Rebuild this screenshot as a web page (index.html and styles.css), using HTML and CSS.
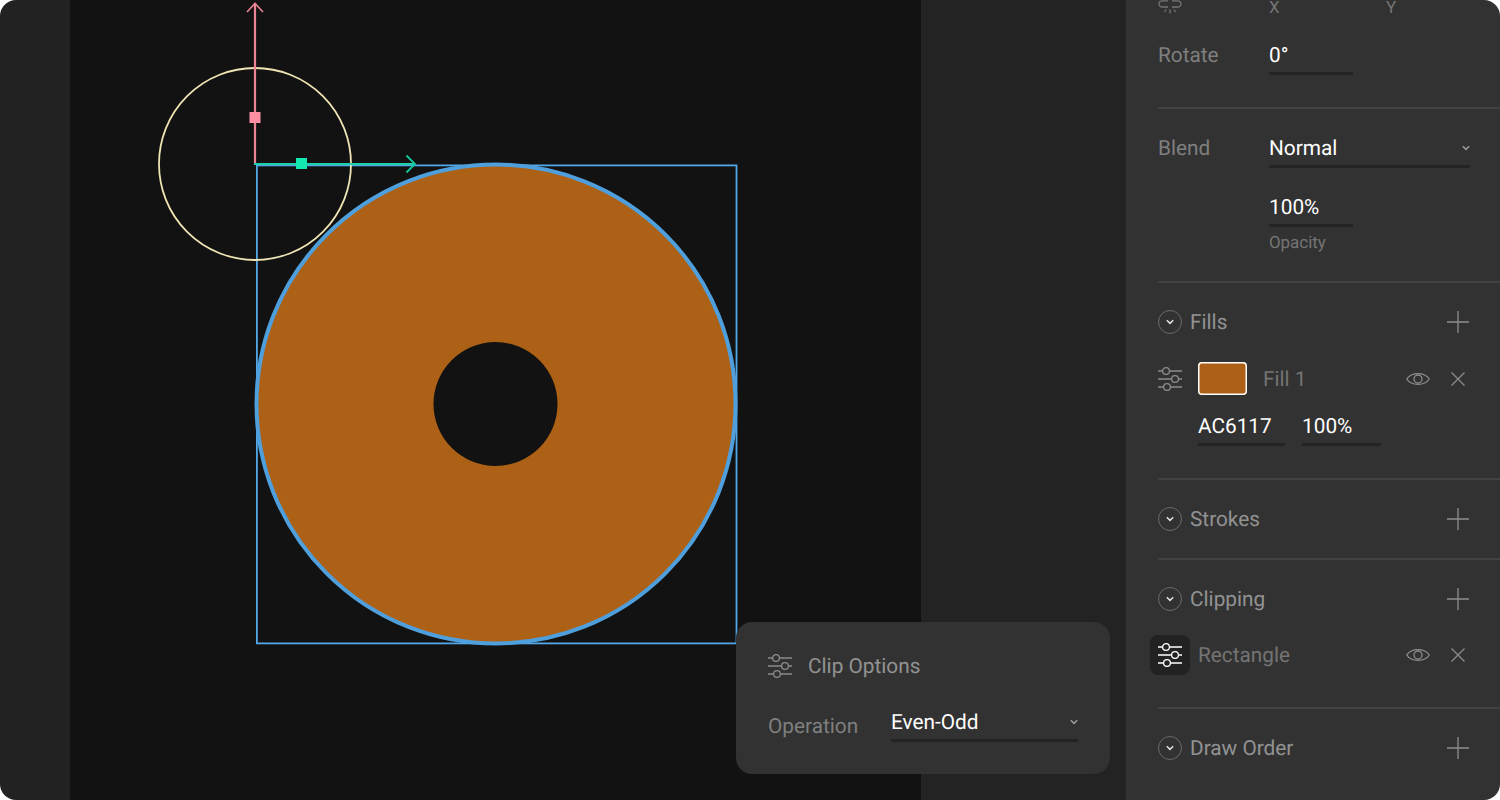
FILE: index.html
```html
<!DOCTYPE html>
<html lang="en">
<head>
    <meta charset="UTF-8">
    <meta name="viewport" content="width=device-width, initial-scale=1.0">
    <title>Clip Options</title>
    <link rel="stylesheet" href="styles.css">
</head>
<body>
    <svg class="defs" width="0" height="0" aria-hidden="true">
        <symbol id="sliders" viewBox="0 0 24 24">
            <path d="M0 4H4.5M11.5 4H24M0 12H13.5M20.5 12H24M0 20H5.5M12.5 20H24" fill="none" stroke="currentColor" stroke-width="1.3"/>
            <circle cx="8" cy="4" r="3.4" fill="none" stroke="currentColor" stroke-width="1.3"/>
            <circle cx="17" cy="12" r="3.4" fill="none" stroke="currentColor" stroke-width="1.3"/>
            <circle cx="9" cy="20" r="3.4" fill="none" stroke="currentColor" stroke-width="1.3"/>
        </symbol>
        <symbol id="eye" viewBox="0 0 24 16">
            <path d="M.7 8C5.5.8 18.5.8 23.3 8 18.5 15.2 5.500 15.2.7 8Z" fill="none" stroke="currentColor" stroke-width="1.3"/>
            <circle cx="12" cy="8" r="4" fill="none" stroke="currentColor" stroke-width="1.3"/>
        </symbol>
        <symbol id="close" viewBox="0 0 16 16">
            <path d="M1.5 1.5L14.5 14.5M14.5 1.5L1.5 14.5" fill="none" stroke="currentColor" stroke-width="1.3"/>
        </symbol>
        <symbol id="plus" viewBox="0 0 22 22">
            <path d="M11 0V22M0 11H22" fill="none" stroke="currentColor" stroke-width="1.3"/>
        </symbol>
        <symbol id="chevron" viewBox="0 0 8 6">
            <path d="M.8 1.2L4 4.4 7.2 1.2" fill="none" stroke="currentColor" stroke-width="1.5"/>
        </symbol>
    </svg>

    <div class="stage">
        <div class="gutter"></div>

        <div class="canvas">
            <svg class="drawing" viewBox="70 0 851 800" width="851" height="800">
                <rect x="256.9" y="165.4" width="479.6" height="478" fill="none" stroke="#52a8e6" stroke-width="1.8"/>
                <path fill-rule="evenodd" fill="#ac6117" d="M256 404a240 240 0 1 0 480 0a240 240 0 1 0 -480 0ZM433.5 404a62 62 0 1 0 124 0a62 62 0 1 0 -124 0Z"/>
                <circle cx="496" cy="404" r="239.5" fill="none" stroke="#4f9fdc" stroke-width="4"/>
                <circle cx="255" cy="164" r="96" fill="none" stroke="#efe5b4" stroke-width="1.8"/>
                <path d="M255 164V3" fill="none" stroke="#ea8494" stroke-width="2.2"/>
                <path d="M247 12L255 3.5 263 12" fill="none" stroke="#ea8494" stroke-width="1.6"/>
                <path d="M254 164H414" fill="none" stroke="#1fcfa8" stroke-width="2.2"/>
                <path d="M406.5 155.5L415 164 406.5 172.5" fill="none" stroke="#14c99a" stroke-width="1.8"/>
                <rect x="249.5" y="112" width="11" height="11" fill="#ff8fa3"/>
                <rect x="296" y="158" width="11" height="11" fill="#12e8b0"/>
            </svg>
        </div>

        <div class="margin"></div>

        <aside class="panel">
            <section class="section section-transform">
                <div class="link-row">
                    <svg class="link-icon" width="24" height="15" viewBox="0 0 24 15">
                        <path d="M10 .8H4.5C2.3.8 1 2.2 1 3.800S2.3 7 4.5 7H10M14 .8H19.5C21.7.8 23 2.2 23 3.800S21.7 7 19.5 7H14M12 9.5V13.5M8 9.5L6.5 12M16 9.5L17.500 12" fill="none" stroke="currentColor" stroke-width="1.3"/>
                    </svg>
                    <span class="axis axis-x">X</span>
                    <span class="axis">Y</span>
                </div>
                <div class="row">
                    <span class="label">Rotate</span>
                    <div class="field field-short">0°</div>
                </div>
            </section>

            <section class="section section-blend">
                <div class="row">
                    <span class="label">Blend</span>
                    <div class="field field-wide">
                        Normal
                        <svg class="chevron" width="8" height="6"><use href="#chevron"/></svg>
                    </div>
                </div>
                <div class="field field-short field-indent">100%</div>
                <div class="hint">Opacity</div>
            </section>

            <section class="section section-fills">
                <div class="head">
                    <span class="toggle"><svg width="8" height="6"><use href="#chevron"/></svg></span>
                    <span class="title">Fills</span>
                    <svg class="add" width="22" height="22"><use href="#plus"/></svg>
                </div>
                <div class="item item-fill">
                    <svg class="tune" width="24" height="24"><use href="#sliders"/></svg>
                    <span class="swatch"></span>
                    <span class="name">Fill 1</span>
                    <svg class="eye" width="24" height="16"><use href="#eye"/></svg>
                    <svg class="close" width="16" height="16"><use href="#close"/></svg>
                </div>
                <div class="color-row">
                    <div class="field field-hex">AC6117</div>
                    <div class="field field-alpha">100%</div>
                </div>
            </section>

            <section class="section section-strokes">
                <div class="head">
                    <span class="toggle"><svg width="8" height="6"><use href="#chevron"/></svg></span>
                    <span class="title">Strokes</span>
                    <svg class="add" width="22" height="22"><use href="#plus"/></svg>
                </div>
            </section>

            <section class="section section-clipping">
                <div class="head">
                    <span class="toggle"><svg width="8" height="6"><use href="#chevron"/></svg></span>
                    <span class="title">Clipping</span>
                    <svg class="add" width="22" height="22"><use href="#plus"/></svg>
                </div>
                <div class="item item-clip">
                    <span class="tune-box"><svg width="24" height="24"><use href="#sliders"/></svg></span>
                    <span class="name">Rectangle</span>
                    <svg class="eye" width="24" height="16"><use href="#eye"/></svg>
                    <svg class="close" width="16" height="16"><use href="#close"/></svg>
                </div>
            </section>

            <section class="section section-order">
                <div class="head">
                    <span class="toggle"><svg width="8" height="6"><use href="#chevron"/></svg></span>
                    <span class="title">Draw Order</span>
                    <svg class="add" width="22" height="22"><use href="#plus"/></svg>
                </div>
            </section>
        </aside>

        <div class="popover">
            <div class="popover-head">
                <svg class="tune" width="24" height="24"><use href="#sliders"/></svg>
                <span class="title">Clip Options</span>
            </div>
            <div class="popover-row">
                <span class="label">Operation</span>
                <div class="field field-op">
                    Even-Odd
                    <svg class="chevron" width="8" height="6"><use href="#chevron"/></svg>
                </div>
            </div>
        </div>
    </div>
</body>
</html>
```

FILE: styles.css
```css
/* Page */
body {
    margin: 0;
    background-color: #fff;
    font-family: 'Roboto', sans-serif;
    font-size: 20.8px;
    line-height: 24px;
    text-rendering: geometricPrecision;
}
.defs {
    position: absolute;
}
.stage {
    position: relative;
    display: flex;
    width: 1500px;
    height: 800px;
    border-radius: 16px;
    overflow: hidden;
}
svg {
    display: block;
    flex-shrink: 0;
}

/* Background columns */
.gutter {
    width: 70px;
    background-color: #222;
}
.canvas {
    width: 851px;
    background-color: #121212;
}
.margin {
    width: 205px;
    background-color: #232323;
}

/* Right panel */
.panel {
    width: 374px;
    background-color: #323232;
}
.section {
    box-sizing: border-box;
    margin-left: 32px;
    border-bottom: 2px solid #424242;
}
.section:last-child {
    border-bottom: none;
}
.section-transform {
    height: 109px;
}
.section-blend {
    height: 174px;
    padding-top: 27px;
}
.section-fills {
    padding: 27px 0 32px;
}
.section-strokes {
    padding: 27px 0 27px;
}
.section-clipping {
    padding: 27px 0 32px;
}
.section-order {
    padding-top: 27px;
}

.link-row {
    display: flex;
    align-items: flex-end;
    height: 16px;
    margin-bottom: 27px;
    color: #757575;
    overflow: hidden;
}
.link-icon {
    align-self: flex-start;
    width: 24px;
    margin-right: 87px;
}
.axis {
    font-size: 16.9px;
    line-height: 16px;
}
.axis-x {
    width: 117px;
}

.row {
    display: flex;
}
.label {
    width: 111px;
    padding-top: 1px;
    color: #7f7f7f;
}

/* Underlined inputs */
.field {
    display: flex;
    justify-content: space-between;
    align-items: center;
    box-sizing: border-box;
    height: 32px;
    padding-bottom: 3px;
    border-bottom: 3px solid #242424;
    color: #fff;
}
.field-short {
    width: 84px;
}
.field-wide {
    width: 201px;
}
.field-indent {
    margin: 27px 0 0 111px;
}
.chevron {
    margin-bottom: 2px;
    color: #9a9a9a;
}
.hint {
    margin: 6px 0 0 111px;
    font-size: 16.9px;
    line-height: 20px;
    color: #757575;
}

/* Section headers */
.head {
    display: flex;
    align-items: center;
    height: 24px;
    padding-right: 31px;
}
.toggle {
    display: flex;
    justify-content: center;
    align-items: center;
    box-sizing: border-box;
    width: 24px;
    height: 24px;
    margin-right: 8px;
    border: 1px solid #6a6a6a;
    border-radius: 50%;
    color: #e0e0e0;
}
.title {
    flex: 1;
    padding-top: 2px;
    color: #929292;
}
.add {
    color: #8e8e8e;
}

/* Fill and clip rows */
.item {
    display: flex;
    align-items: center;
    padding-right: 34px;
    color: #8c8c8c;
}
.item-fill {
    height: 33px;
    margin-top: 28px;
}
.item-clip {
    height: 40px;
    margin: 24px 0 0 -8px;
}
.tune {
    color: #8c8c8c;
}
.swatch {
    width: 49px;
    height: 33px;
    margin: 0 16px;
    background-color: #ac6117;
    box-shadow: inset 0 0 0 1.5px #fff;
    border-radius: 4px;
}
.name {
    flex: 1;
    padding-top: 2px;
    color: #747474;
}
.eye {
    margin-right: 20px;
}
.tune-box {
    display: flex;
    justify-content: center;
    align-items: center;
    width: 40px;
    height: 40px;
    margin-right: 8px;
    background-color: #222;
    border-radius: 8px;
    color: #fff;
}
.color-row {
    display: flex;
    gap: 17px;
    margin: 19px 0 0 40px;
}
.field-hex {
    width: 87px;
}
.field-alpha {
    width: 79px;
}

/* Clip options popover */
.popover {
    position: absolute;
    left: 736px;
    top: 622px;
    box-sizing: border-box;
    width: 374px;
    height: 152px;
    padding: 32px 32px 0;
    background-color: #323232;
    border-radius: 16px;
}
.popover-head {
    display: flex;
    align-items: center;
    gap: 16px;
    height: 24px;
}
.popover-row {
    display: flex;
    margin-top: 32px;
}
.popover-row .label {
    width: 123px;
    padding-top: 5px;
}
.field-op {
    width: 187px;
}
```
